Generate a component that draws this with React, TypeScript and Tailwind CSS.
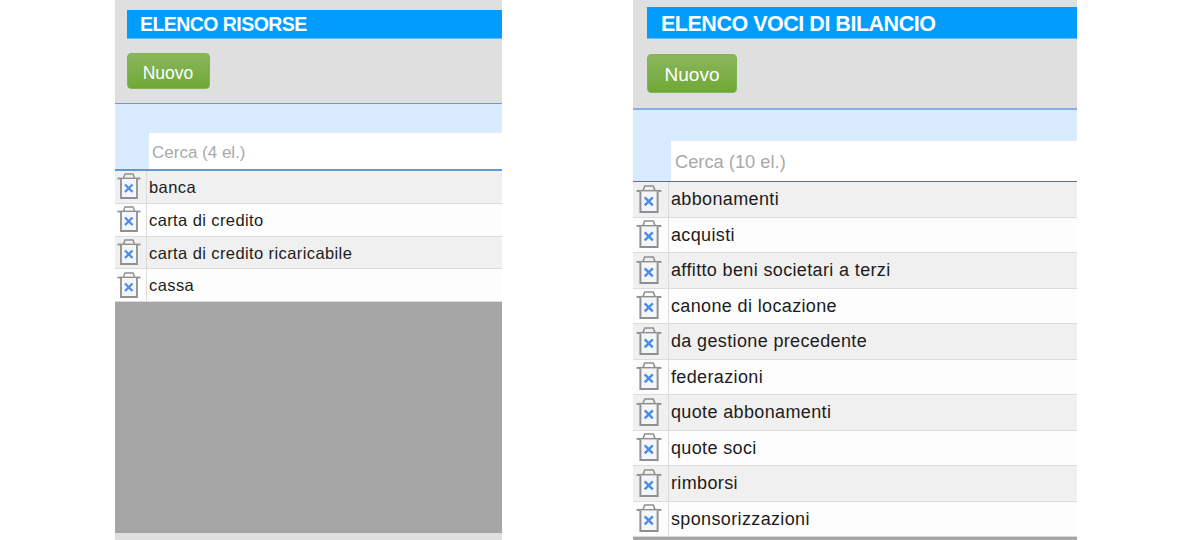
import React from "react";

function Trash({ className }: { className: string }) {
  return (
    <svg viewBox="0 0 24 26" className={className} fill="none">
      <path d="M6.5 5 L8 1 H16 L17.5 5" stroke="#8f8f8f" strokeWidth="1.4" />
      <path d="M0.5 5.5 H23.5" stroke="#8f8f8f" strokeWidth="1.8" />
      <path d="M4 6 V25 H20 V6" stroke="#8f8f8f" strokeWidth="1.8" fill="#f2f5fa" />
      <path d="M8 11.5 L15.5 19 M15.5 11.5 L8 19" stroke="#4a8ce8" strokeWidth="2.2" />
    </svg>
  );
}

function Left() {
  const rows = ["banca", "carta di credito", "carta di credito ricaricabile", "cassa"];
  return (
    <div className="w-[387px] h-[540px] flex flex-col bg-[#dfdfdf] overflow-hidden">
      <div className="h-[103px] shrink-0 pt-[10px] pl-[12px] flex flex-col items-start">
        <div className="w-full h-[29px] bg-[#009dff] border-b border-[#6bb8f0] pl-[13px] text-white font-bold text-[19.5px] leading-[29px] tracking-[-0.55px]">
          ELENCO RISORSE
        </div>
        <button className="mt-[14px] w-[83px] h-[36px] rounded-[4px] border border-[#7fb552] bg-gradient-to-b from-[#8ab65c] to-[#70a834] text-white text-[17.5px] leading-[30px] pt-[3px] pr-[1px]">
          Nuovo
        </button>
      </div>
      <div className="h-[68px] shrink-0 bg-[#daebff] border-t border-[#6a9bd8] border-b-2 border-b-[#5f97d8] flex flex-col justify-end pl-[34px]">
        <div className="h-[37px] bg-white border-t border-[#e3ecf6] pl-[3px] text-[#a9a9a9] text-[17px] leading-[40px]">
          Cerca (4 el.)
        </div>
      </div>
      {rows.map((r, i) => (
        <div
          key={r}
          className={`h-[32.75px] shrink-0 flex border-b border-[#dcdcdc] ${i % 2 ? "bg-[#fdfdfd]" : "bg-[#f0f0f0]"}`}
        >
          <div className="w-[32px] shrink-0 border-r border-[#dcdcdc] flex items-center pl-[2px]">
            <Trash className="w-[24px] h-[26px] -mt-[1px]" />
          </div>
          <div className="pl-[2px] text-[#1c1c1c] text-[16.5px] leading-[33px] tracking-[0.4px]">{r}</div>
        </div>
      ))}
      <div className="flex-1 bg-[#a5a5a5]" />
      <div className="h-[7px] shrink-0" />
    </div>
  );
}

function Right() {
  const rows = [
    "abbonamenti",
    "acquisti",
    "affitto beni societari a terzi",
    "canone di locazione",
    "da gestione precedente",
    "federazioni",
    "quote abbonamenti",
    "quote soci",
    "rimborsi",
    "sponsorizzazioni",
  ];
  return (
    <div className="w-[444px] h-[540px] flex flex-col bg-[#dfdfdf] overflow-hidden">
      <div className="h-[108px] shrink-0 pt-[7px] pl-[14px] flex flex-col items-start">
        <div className="w-full h-[32px] bg-[#009dff] border-b border-[#6bb8f0] pl-[14px] text-white font-bold text-[21.5px] leading-[34px] tracking-[-0.48px]">
          ELENCO VOCI DI BILANCIO
        </div>
        <button className="mt-[15px] w-[90px] h-[39px] rounded-[4px] border border-[#7fb552] bg-gradient-to-b from-[#8ab65c] to-[#70a834] text-white text-[19px] leading-[35px] pt-[1px]">
          Nuovo
        </button>
      </div>
      <div className="h-[74px] shrink-0 bg-[#daebff] border-t-2 border-[#86aee0] border-b border-b-[#5d7288] flex flex-col justify-end pl-[38px]">
        <div className="h-[41px] bg-white border-t border-[#e3ecf6] pl-[4px] text-[#a9a9a9] text-[18.3px] leading-[41px]">
          Cerca (10 el.)
        </div>
      </div>
      {rows.map((r, i) => (
        <div
          key={r}
          className={`h-[35.5px] shrink-0 flex border-b border-[#dcdcdc] ${i % 2 ? "bg-[#fdfdfd]" : "bg-[#f0f0f0]"}`}
        >
          <div className="w-[36px] shrink-0 border-r border-[#dcdcdc] flex items-center pl-[3px]">
            <Trash className="w-[26px] h-[28px] -mt-[1px]" />
          </div>
          <div className="pl-[2px] text-[#1c1c1c] text-[18px] leading-[35.5px] tracking-[0.36px]">{r}</div>
        </div>
      ))}
      <div className="h-[3px] shrink-0 bg-[#a5a5a5]" />
    </div>
  );
}

export default function App() {
  return (
    <div className="w-[1200px] h-[540px] bg-white flex pl-[115px] gap-[131px] overflow-hidden font-['Liberation_Sans',Arial,sans-serif]">
      <Left />
      <Right />
    </div>
  );
}
